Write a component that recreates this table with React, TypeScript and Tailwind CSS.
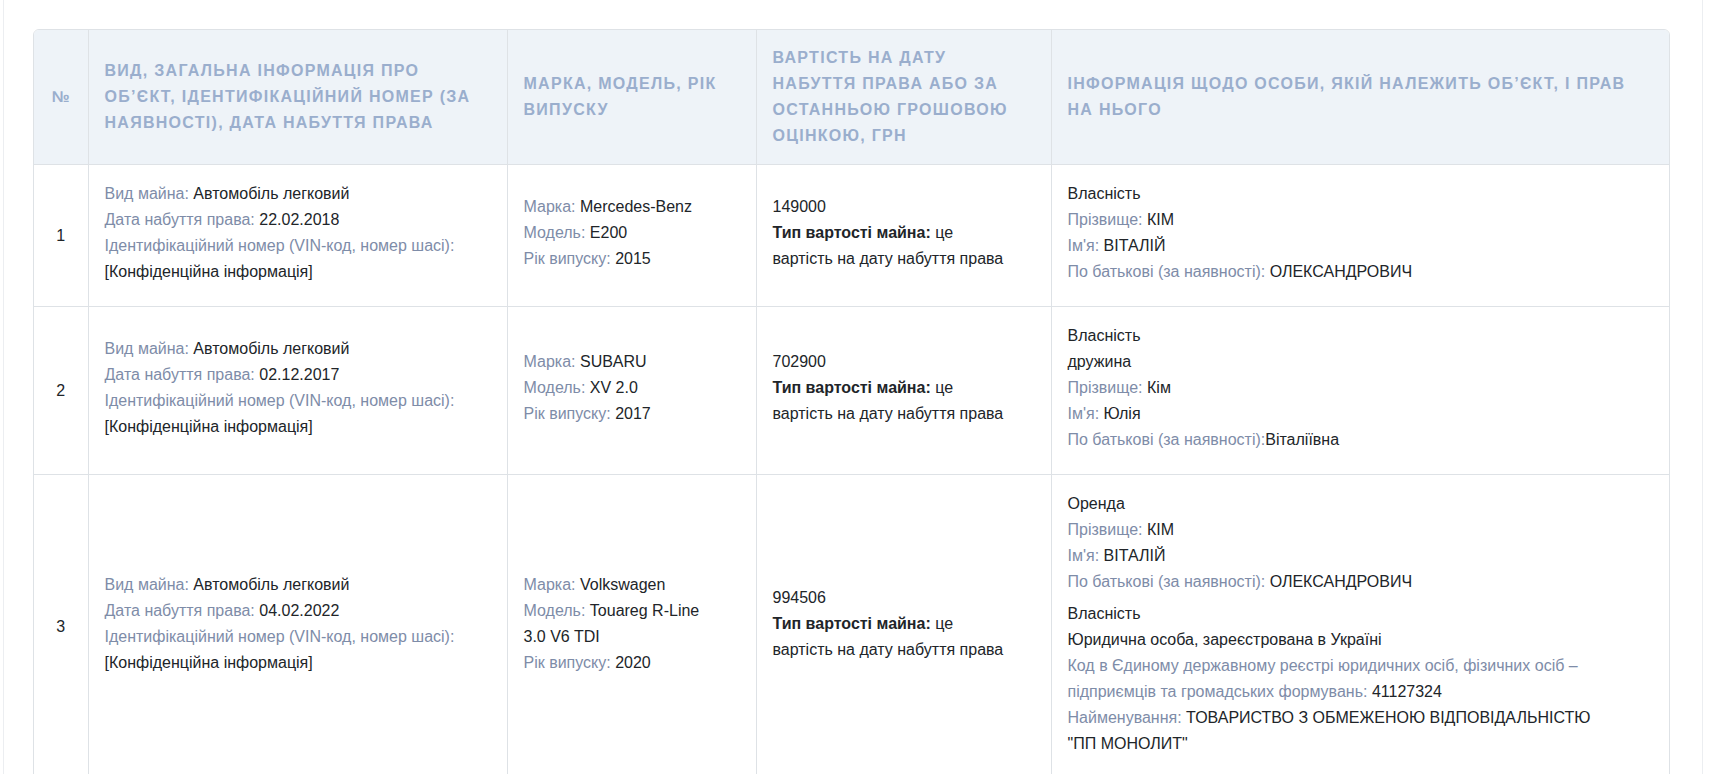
import React from "react"

type Line = { label?: string; value?: React.ReactNode }

const L = ({ label, value }: Line) => (
  <div>
    {label && <span className="text-[#7e8ca8]">{label}</span>}
    {value && <span className="text-[#212529]">{value}</span>}
  </div>
)

const Block = ({ lines }: { lines: Line[] }) => (
  <div className="mb-[6px]">
    {lines.map((l, i) => (
      <L key={i} {...l} />
    ))}
  </div>
)

const rows = [
  {
    n: "1",
    obj: [
      { label: "Вид майна: ", value: "Автомобіль легковий" },
      { label: "Дата набуття права: ", value: "22.02.2018" },
      { label: "Ідентифікаційний номер (VIN-код, номер шасі): " },
      { value: "[Конфіденційна інформація]" },
    ],
    car: [
      { label: "Марка: ", value: "Mercedes-Benz" },
      { label: "Модель: ", value: "E200" },
      { label: "Рік випуску: ", value: "2015" },
    ],
    price: "149000",
    owners: [
      [
        { value: "Власність" },
        { label: "Прізвище: ", value: "КІМ" },
        { label: "Ім'я: ", value: "ВІТАЛІЙ" },
        { label: "По батькові (за наявності): ", value: "ОЛЕКСАНДРОВИЧ" },
      ],
    ],
  },
  {
    n: "2",
    obj: [
      { label: "Вид майна: ", value: "Автомобіль легковий" },
      { label: "Дата набуття права: ", value: "02.12.2017" },
      { label: "Ідентифікаційний номер (VIN-код, номер шасі): " },
      { value: "[Конфіденційна інформація]" },
    ],
    car: [
      { label: "Марка: ", value: "SUBARU" },
      { label: "Модель: ", value: "XV 2.0" },
      { label: "Рік випуску: ", value: "2017" },
    ],
    price: "702900",
    owners: [
      [
        { value: "Власність" },
        { value: "дружина" },
        { label: "Прізвище: ", value: "Кім" },
        { label: "Ім'я: ", value: "Юлія" },
        { label: "По батькові (за наявності):", value: "Віталіївна" },
      ],
    ],
  },
  {
    n: "3",
    obj: [
      { label: "Вид майна: ", value: "Автомобіль легковий" },
      { label: "Дата набуття права: ", value: "04.02.2022" },
      { label: "Ідентифікаційний номер (VIN-код, номер шасі): " },
      { value: "[Конфіденційна інформація]" },
    ],
    car: [
      { label: "Марка: ", value: "Volkswagen" },
      {
        label: "Модель: ",
        value: (
          <>
            Touareg R-Line
            <br />
            3.0 V6 TDI
          </>
        ),
      },
      { label: "Рік випуску: ", value: "2020" },
    ],
    price: "994506",
    owners: [
      [
        { value: "Оренда" },
        { label: "Прізвище: ", value: "КІМ" },
        { label: "Ім'я: ", value: "ВІТАЛІЙ" },
        { label: "По батькові (за наявності): ", value: "ОЛЕКСАНДРОВИЧ" },
      ],
      [
        { value: "Власність" },
        { value: "Юридична особа, зареєстрована в Україні" },
        {
          label:
            "Код в Єдиному державному реєстрі юридичних осіб, фізичних осіб – підприємців та громадських формувань: ",
          value: "41127324",
        },
        {
          label: "Найменування: ",
          value: (
            <>
              ТОВАРИСТВО З ОБМЕЖЕНОЮ ВІДПОВІДАЛЬНІСТЮ
              <br />
              "ПП МОНОЛИТ"
            </>
          ),
        },
      ],
    ],
  },
]

const th = "border-l border-[#dee2e6] px-4 py-[15px] align-middle text-left font-bold uppercase tracking-[0.08em] text-[#9aaecd]"
const td = "border-l border-t border-[#dee2e6] px-4 pt-4 pb-[15px] align-middle"

export default function App() {
  return (
    <div className="min-h-screen bg-white font-['Liberation_Sans',Arial,sans-serif] text-[16px] leading-[26px] text-[#212529]">
      <div className="ml-[3px] w-[1700px] border-x border-[#eceef1] pl-[29px] pt-[29px]">
        <div className="w-[1637px] overflow-hidden rounded-t-[6px] border border-[#dee2e6]">
          <table className="w-full table-fixed border-collapse">
            <colgroup>
              <col className="w-[54px]" />
              <col className="w-[419px]" />
              <col className="w-[249px]" />
              <col className="w-[295px]" />
              <col />
            </colgroup>
            <thead className="bg-[#eef3f8]">
              <tr>
                <th className="px-2 py-[15px] text-center align-middle font-bold text-[#9aaecd]">№</th>
                <th className={th}>Вид, загальна інформація про об’єкт, ідентифікаційний номер (за наявності), дата набуття права</th>
                <th className={th}>Марка, модель, рік випуску</th>
                <th className={th}>Вартість на дату набуття права або за останньою грошовою оцінкою, грн</th>
                <th className={th}>Інформація щодо особи, якій належить об’єкт, і прав на нього</th>
              </tr>
            </thead>
            <tbody>
              {rows.map((r) => (
                <tr key={r.n}>
                  <td className="border-t border-[#dee2e6] px-2 py-4 text-center align-middle">{r.n}</td>
                  <td className={td}>
                    <Block lines={r.obj} />
                  </td>
                  <td className={td}>
                    <Block lines={r.car} />
                  </td>
                  <td className={td}>
                    <div className="mb-[6px]">
                      <div>{r.price}</div>
                      <div>
                        <span className="font-bold">Тип вартості майна:</span> це
                        <br />
                        вартість на дату набуття права
                      </div>
                    </div>
                  </td>
                  <td className={td}>
                    {r.owners.map((o, i) => (
                      <Block key={i} lines={o} />
                    ))}
                  </td>
                </tr>
              ))}
            </tbody>
          </table>
        </div>
      </div>
    </div>
  )
}
